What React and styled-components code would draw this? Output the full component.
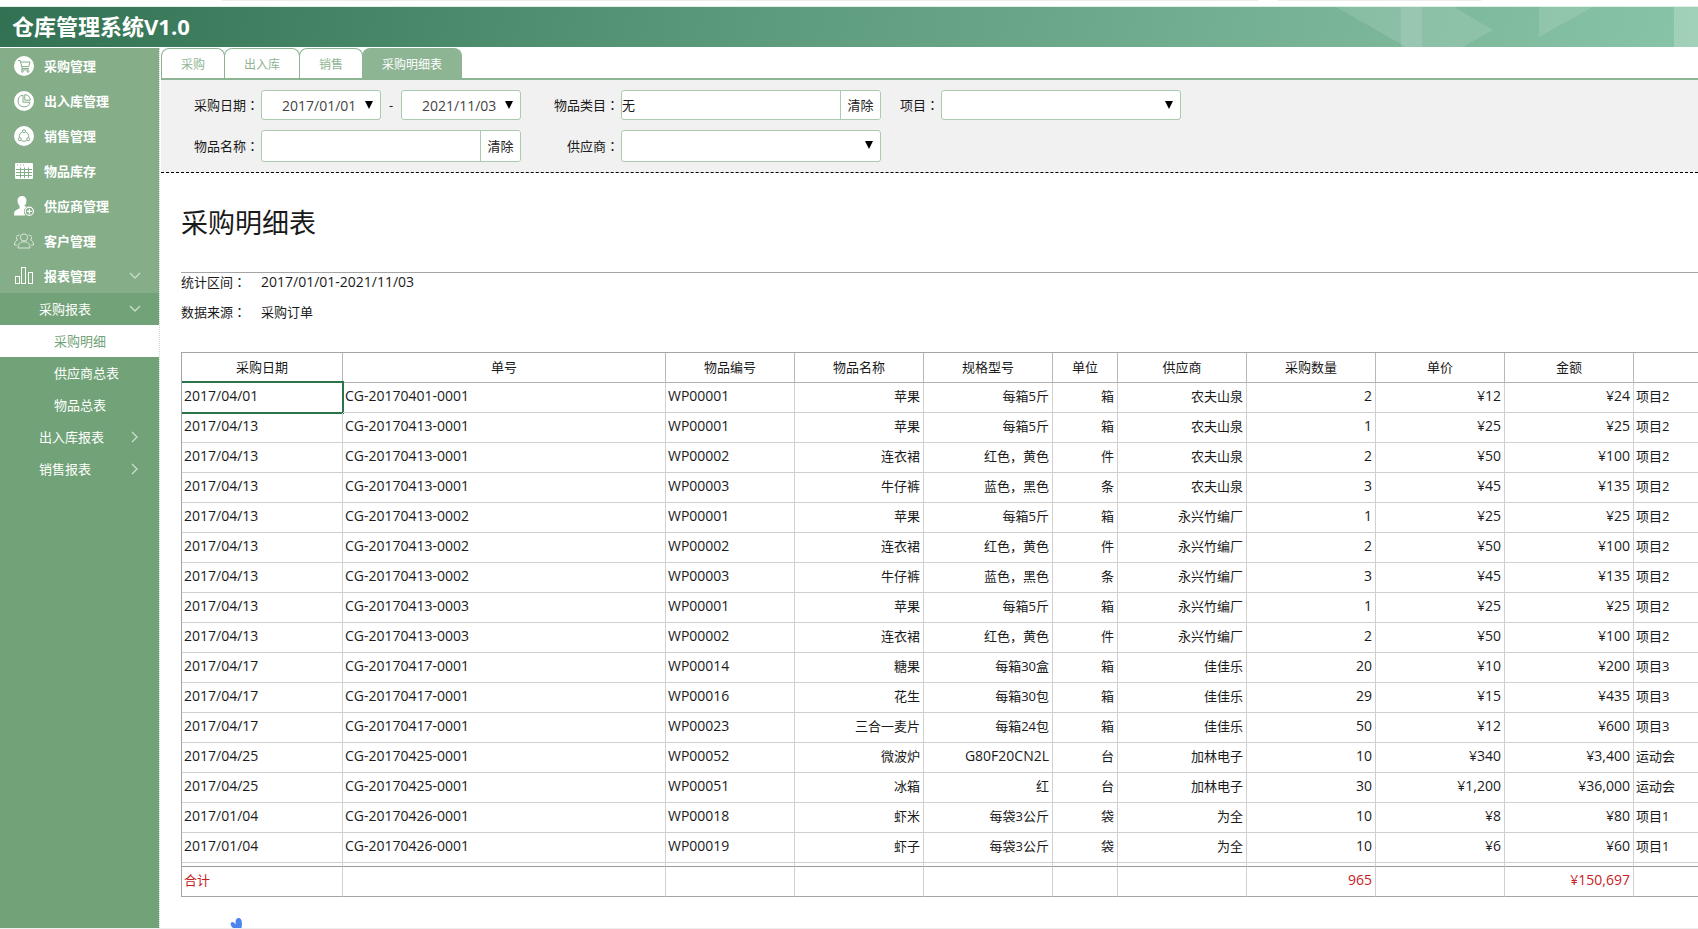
import React from 'react';
import styled, { createGlobalStyle } from 'styled-components';

const menu = [
    { label: '采购管理', icon: 'cart' },
    { label: '出入库管理', icon: 'pie' },
    { label: '销售管理', icon: 'share' },
    { label: '物品库存', icon: 'grid' },
    { label: '供应商管理', icon: 'supplier' },
    { label: '客户管理', icon: 'people' },
    { label: '报表管理', icon: 'bars', open: true },
];

const subMenu = [
    { label: '采购报表', arrow: 'down' },
    { label: '采购明细', leaf: true, active: true },
    { label: '供应商总表', leaf: true },
    { label: '物品总表', leaf: true },
    { label: '出入库报表', arrow: 'right' },
    { label: '销售报表', arrow: 'right' },
];

const tabs = ['采购', '出入库', '销售', '采购明细表'];

const columns = [
    { title: '采购日期', width: 161, latin: true },
    { title: '单号', width: 323, latin: true },
    { title: '物品编号', width: 129, latin: true },
    { title: '物品名称', width: 129, align: 'right' },
    { title: '规格型号', width: 129, align: 'right' },
    { title: '单位', width: 65, align: 'right' },
    { title: '供应商', width: 129, align: 'right' },
    { title: '采购数量', width: 129, align: 'right', latin: true },
    { title: '单价', width: 129, align: 'right', latin: true },
    { title: '金额', width: 129, align: 'right', latin: true },
    { title: '' },
];

const rows = [
    ['2017/04/01', 'CG-20170401-0001', 'WP00001', '苹果', '每箱5斤', '箱', '农夫山泉', '2', '¥12', '¥24', '项目2'],
    ['2017/04/13', 'CG-20170413-0001', 'WP00001', '苹果', '每箱5斤', '箱', '农夫山泉', '1', '¥25', '¥25', '项目2'],
    ['2017/04/13', 'CG-20170413-0001', 'WP00002', '连衣裙', '红色，黄色', '件', '农夫山泉', '2', '¥50', '¥100', '项目2'],
    ['2017/04/13', 'CG-20170413-0001', 'WP00003', '牛仔裤', '蓝色，黑色', '条', '农夫山泉', '3', '¥45', '¥135', '项目2'],
    ['2017/04/13', 'CG-20170413-0002', 'WP00001', '苹果', '每箱5斤', '箱', '永兴竹编厂', '1', '¥25', '¥25', '项目2'],
    ['2017/04/13', 'CG-20170413-0002', 'WP00002', '连衣裙', '红色，黄色', '件', '永兴竹编厂', '2', '¥50', '¥100', '项目2'],
    ['2017/04/13', 'CG-20170413-0002', 'WP00003', '牛仔裤', '蓝色，黑色', '条', '永兴竹编厂', '3', '¥45', '¥135', '项目2'],
    ['2017/04/13', 'CG-20170413-0003', 'WP00001', '苹果', '每箱5斤', '箱', '永兴竹编厂', '1', '¥25', '¥25', '项目2'],
    ['2017/04/13', 'CG-20170413-0003', 'WP00002', '连衣裙', '红色，黄色', '件', '永兴竹编厂', '2', '¥50', '¥100', '项目2'],
    ['2017/04/17', 'CG-20170417-0001', 'WP00014', '糖果', '每箱30盒', '箱', '佳佳乐', '20', '¥10', '¥200', '项目3'],
    ['2017/04/17', 'CG-20170417-0001', 'WP00016', '花生', '每箱30包', '箱', '佳佳乐', '29', '¥15', '¥435', '项目3'],
    ['2017/04/17', 'CG-20170417-0001', 'WP00023', '三合一麦片', '每箱24包', '箱', '佳佳乐', '50', '¥12', '¥600', '项目3'],
    ['2017/04/25', 'CG-20170425-0001', 'WP00052', '微波炉', 'G80F20CN2L', '台', '加林电子', '10', '¥340', '¥3,400', '运动会'],
    ['2017/04/25', 'CG-20170425-0001', 'WP00051', '冰箱', '红', '台', '加林电子', '30', '¥1,200', '¥36,000', '运动会'],
    ['2017/01/04', 'CG-20170426-0001', 'WP00018', '虾米', '每袋3公斤', '袋', '为全', '10', '¥8', '¥80', '项目1'],
    ['2017/01/04', 'CG-20170426-0001', 'WP00019', '虾子', '每袋3公斤', '袋', '为全', '10', '¥6', '¥60', '项目1'],
];

const totals = ['合计', '', '', '', '', '', '', '965', '', '¥150,697', ''];

const icons = {
    cart: (
        <>
            <circle cx="10" cy="10" r="10" fill="#fff" />
            <path d="M4 4.600h2.200l2 7.900h6.600M6.600 6h9.400l-1.300 4.600H7.800M8.200 12.500l-.6 1.400h7.200" stroke="#84ad88" />
            <circle cx="8.400" cy="15.400" r=".9" stroke="#84ad88" />
            <circle cx="14" cy="15.400" r=".9" stroke="#84ad88" />
        </>
    ),
    pie: (
        <>
            <circle cx="10" cy="10" r="10" fill="#fff" />
            <path d="M9 4a6 6 0 1 0 7 7.200H9z" stroke="#84ad88" />
            <path d="M10.800 3.600v5.600h5.500a5.600 5.600 0 0 0-5.500-5.600z" stroke="#84ad88" />
        </>
    ),
    share: (
        <>
            <circle cx="10" cy="10" r="10" fill="#fff" />
            <path d="M8.400 5.800C6.300 6.800 5.100 9 5.300 11.400M11.600 5.800c2.100 1 3.300 3.200 3.100 5.600M7.200 14.500c1.700 1 3.900 1 5.600 0" stroke="#84ad88" />
            <circle cx="10" cy="5.200" r="1.500" stroke="#84ad88" />
            <circle cx="5.800" cy="13.200" r="1.500" stroke="#84ad88" />
            <circle cx="14.200" cy="13.200" r="1.500" stroke="#84ad88" />
        </>
    ),
    grid: (
        <>
            <rect x="1" y="2" width="18" height="16" rx="1" fill="#fff" />
            <path d="M3 4h1M6 4h1M9 4h1" stroke="#84ad88" />
            <path d="M2 8.500h16M2 11.500h16M2 14.500h16M6.500 6.500v10.500M10.500 6.500v10.500M14.500 6.500v10.500" stroke="#84ad88" />
        </>
    ),
    supplier: (
        <>
            <path d="M8 0C5 0 3.400 2.300 3.600 5.200c.2 2 .9 3.600 2 4.600v2.400C4 13.400.6 14 .3 16.400L0 19.400h11.600a5.200 5.200 0 0 1 1.600-8.600l-2.800-.6V9.800c1.200-1 1.900-2.700 2-4.600C12.600 2.200 11 0 8 0z" fill="#fff" />
            <circle cx="15.300" cy="15.300" r="5" fill="#84ad88" />
            <circle cx="15.300" cy="15.300" r="4.100" stroke="#fff" strokeWidth="1.200" />
            <path d="M15.300 12.800v5M12.800 15.300h5" stroke="#fff" strokeWidth="1.200" />
        </>
    ),
    people: (
        <>
            <circle cx="10" cy="6.500" r="3.600" stroke="#dbe9dc" />
            <path d="M4 17c0-4 2.200-6.200 6-6.200s6 2.200 6 6.200zM5.400 4.200C3.400 3.800 2.200 5 2.400 6.800c.1 1 .5 1.700 1.200 2.200C1.600 9.800.5 11.400.5 14h2.300M14.600 4.200c2-.4 3.200.8 3 2.600-.1 1-.5 1.700-1.200 2.200 2 .8 3.100 2.400 3.100 5h-2.300" stroke="#dbe9dc" />
        </>
    ),
    bars: (
        <>
            <rect x="1.500" y="10.500" width="4" height="7" stroke="#fff" />
            <rect x="7.500" y="1.500" width="4" height="16" stroke="#fff" />
            <rect x="14.500" y="6.500" width="4" height="11" stroke="#fff" />
        </>
    ),
};

// The colon sits in the middle of its full-width box
function Text({ children }) {
    return children.split(/(：)/).map((part, i) => (
        part === '：' ? <Colon key={i}>{part}</Colon> : part
    ));
}

function Chevron({ dir }) {
    return (
        <ChevronIcon viewBox="0 0 12 12">
            <path d={dir === 'down' ? 'M1 3l5 5 5-5' : 'M3 1l5 5-5 5'} />
        </ChevronIcon>
    );
}

function DropDown({ id, label, value, date }) {
    return (
        <SelectWrap>
            <Select id={id} aria-label={label} $date={date} defaultValue={value}>
                <option value={value}>{value}</option>
            </Select>
            <Arrow viewBox="0 0 8 8"><path d="M0 0h8L4 8z" /></Arrow>
        </SelectWrap>
    );
}

function Clearable({ id, value }) {
    return (
        <InputGroup>
            <Input id={id} type="text" defaultValue={value} />
            <ClearButton type="button">清除</ClearButton>
        </InputGroup>
    );
}

function App() {
    return (
        <Page>
            <GlobalStyle />
            <TopStrip><TopBar $width="1038px" /><TopBar $width="203px" /></TopStrip>
            <Header>
                <Brand>仓库管理系统V1.0</Brand>
                <HeaderArt viewBox="0 0 368 40">
                    <path d="M6 0h118l39 23-30 17H76z" />
                    <path d="M71 0h21v40H71z" />
                    <path d="M209 0h54l-54 30z" />
                    <path d="M344 0h24v40h-24z" fillOpacity=".22" />
                </HeaderArt>
            </Header>
            <Body>
                <Sidebar>
                    {menu.map((item) => (
                        <MenuItem href="#" key={item.label}>
                            <MenuIcon viewBox="0 0 20 20">{icons[item.icon]}</MenuIcon>
                            <MenuLabel>{item.label}</MenuLabel>
                            {item.open && <Chevron dir="down" />}
                        </MenuItem>
                    ))}
                    <SubMenu>
                        {subMenu.map((item) => (
                            <SubItem href="#" key={item.label} $leaf={item.leaf} $active={item.active}>
                                <MenuLabel>{item.label}</MenuLabel>
                                {item.arrow && <Chevron dir={item.arrow} />}
                            </SubItem>
                        ))}
                    </SubMenu>
                </Sidebar>
                <Main>
                    <Tabs>
                        {tabs.map((tab, i) => (
                            <Tab type="button" key={tab} $active={i === 3}>{tab}</Tab>
                        ))}
                    </Tabs>
                    <Filters>
                        <Label htmlFor="from"><Text>采购日期：</Text></Label>
                        <DateRange>
                            <DropDown id="from" value="2017/01/01" date />
                            <span>-</span>
                            <DropDown id="to" label="结束日期" value="2021/11/03" date />
                        </DateRange>
                        <Label htmlFor="category"><Text>物品类目：</Text></Label>
                        <Clearable id="category" value="无" />
                        <Label htmlFor="project"><Text>项目：</Text></Label>
                        <DropDown id="project" value="" />
                        <Label htmlFor="goods"><Text>物品名称：</Text></Label>
                        <Clearable id="goods" value="" />
                        <Label htmlFor="supplier"><Text>供应商：</Text></Label>
                        <DropDown id="supplier" value="" />
                    </Filters>
                    <Report>
                        <Title>采购明细表</Title>
                        <Info>
                            <dt><Text>统计区间：</Text></dt>
                            <InfoDate>2017/01/01-2021/11/03</InfoDate>
                            <dt><Text>数据来源：</Text></dt>
                            <dd>采购订单</dd>
                        </Info>
                        <Table>
                            <colgroup>
                                {columns.map((col, i) => <Col key={i} $width={col.width} />)}
                            </colgroup>
                            <thead>
                                <tr>
                                    {columns.map((col, i) => <Th key={i} scope="col">{col.title}</Th>)}
                                </tr>
                            </thead>
                            <tbody>
                                {rows.map((row, r) => (
                                    <tr key={r}>
                                        {row.map((cell, c) => (
                                            <Td
                                                key={c}
                                                $align={columns[c].align}
                                                $latin={columns[c].latin || cell === 'G80F20CN2L'}
                                                $selected={r === 0 && c === 0}
                                            >
                                                {cell}
                                            </Td>
                                        ))}
                                    </tr>
                                ))}
                                <tr aria-hidden="true">
                                    {columns.map((col, i) => <CutCell key={i} />)}
                                </tr>
                            </tbody>
                            <tfoot>
                                <tr>
                                    {totals.map((cell, c) => (
                                        <TotalCell key={c} $align={columns[c].align} $latin={columns[c].align}>{cell}</TotalCell>
                                    ))}
                                </tr>
                            </tfoot>
                        </Table>
                    </Report>
                </Main>
            </Body>
            <Heart viewBox="0 0 12 10">
                <path d="M3 10C0 8 0 4 2.500 4 4 4 5 5.500 5.800 6.500 5 3 6 0 8.500 0 12 0 12.500 5 11.500 10z" />
            </Heart>
        </Page>
    );
}

export default App;

const GlobalStyle = createGlobalStyle`
    *{
        box-sizing:border-box;
    }

    body{
        margin:0;
        background:#fff;
        color:#1a1a1a;
        font-family:"Open Sans", "Noto Sans CJK SC", sans-serif;
        font-size:13px;
    }

    button, input, select{
        font-family:inherit;
        font-size:inherit;
        color:inherit;
    }
`

const Page = styled.div`
    position:relative;
    min-height:100vh;
    display:flex;
    flex-direction:column;
    border-bottom:1px solid #eee;
    overflow:hidden;
`

const TopStrip = styled.div`
    height:7px;
    padding-left:221px;
    display:flex;
    gap:19px;
    border-bottom:1px solid #e0f0e7;
`

const TopBar = styled.div`
    width:${(p) => p.$width};
    height:1px;
    background:#ededed;
`

const Header = styled.header`
    height:40px;
    padding-left:12px;
    display:flex;
    justify-content:space-between;
    background:linear-gradient(100deg, #327152 0%, #5c9b7c 45%, #7ab598 80%, #88c4a7 100%);
`

const Brand = styled.h1`
    margin:0;
    color:#fff;
    font-size:22px;
    line-height:38px;
    font-weight:bold;
`

const HeaderArt = styled.svg`
    width:368px;
    height:40px;
    fill:#fff;
    fill-opacity:.12;
`

const Body = styled.div`
    flex:1;
    display:flex;
    margin-top:1px;
`

const Sidebar = styled.nav`
    width:160px;
    flex-shrink:0;
    display:flex;
    flex-direction:column;
    background:#84ad88;
    background-clip:padding-box;
    border-right:1px dotted #c8d8ca;
`

const MenuItem = styled.a`
    height:35px;
    padding:0 18px 0 14px;
    display:flex;
    align-items:center;
    color:#fff;
    font-weight:bold;
    text-decoration:none;
`

const MenuIcon = styled.svg`
    width:20px;
    height:20px;
    margin-right:10px;
    fill:none;
`

const MenuLabel = styled.span`
    flex:1;
    line-height:20px;
`

const ChevronIcon = styled.svg`
    width:12px;
    height:12px;
    fill:none;
    stroke:#c8dcca;
    stroke-width:1.4;
`

const SubMenu = styled.div`
    flex:1;
    background:#72a378;
`

const SubItem = styled.a`
    height:32px;
    padding:0 18px 0 ${(p) => (p.$leaf ? '54px' : '39px')};
    display:flex;
    align-items:center;
    text-decoration:none;
    color:${(p) => (p.$active ? '#72a378' : '#fff')};
    background:${(p) => (p.$active ? '#fff' : 'none')};
`

const Main = styled.main`
    flex:1;
    min-width:0;
    padding-left:1px;
`

const Tabs = styled.div`
    height:32px;
    display:flex;
    border-bottom:2px solid #8eb593;
`

const Tab = styled.button`
    height:30px;
    padding:0 19px;
    border:1px solid #8eb593;
    border-bottom:none;
    border-radius:8px 8px 0 0;
    font-size:12px;
    color:${(p) => (p.$active ? '#fff' : '#8eb593')};
    background:${(p) => (p.$active ? '#8eb593' : '#fff')};

    & + &{
        margin-left:-1px;
    }
`

const Filters = styled.form`
    display:grid;
    grid-template-columns:100px 260px 100px 260px 60px 240px;
    grid-template-rows:30px 32px;
    row-gap:10px;
    padding:10px 0;
    background:#f1f1f1;
    border-bottom:1px dashed #000;
`

const Label = styled.label`
    padding-right:2px;
    align-self:center;
    text-align:right;
    line-height:20px;
`

const Colon = styled.span`
    font-family:"Noto Sans CJK TC", sans-serif;
`

const DateRange = styled.div`
    display:grid;
    grid-template-columns:120px 20px 120px;
    align-items:center;
    text-align:center;
`

const SelectWrap = styled.div`
    position:relative;
    display:flex;
    height:100%;
`

const Select = styled.select`
    width:100%;
    padding:0 20px;
    appearance:none;
    border:1px solid #abcaae;
    border-radius:3px;
    background:#fff;
    color:#444;
    font-size:${(p) => (p.$date ? '14px' : '13px')};
`

const Arrow = styled.svg`
    position:absolute;
    right:8px;
    top:11px;
    width:8px;
    height:8px;
    pointer-events:none;
`

const InputGroup = styled.div`
    display:flex;
    background:#fff;
    border:1px solid #abcaae;
    border-radius:3px;
    overflow:hidden;
`

const Input = styled.input`
    flex:1;
    min-width:0;
    padding:0 0 2px;
    border:none;
    background:none;
`

const ClearButton = styled.button`
    width:40px;
    padding:0 0 2px;
    border:none;
    border-left:1px solid #abcaae;
    background:#fff;
`

const Report = styled.section`
    padding-left:20px;
`

const Title = styled.h2`
    margin:0;
    height:100px;
    border-bottom:1px solid #a5a5a5;
    font-size:27px;
    line-height:100px;
    font-weight:normal;
`

const Info = styled.dl`
    margin:0 0 31px;
    display:grid;
    grid-template-columns:80px 1fr;
    row-gap:12px;
    line-height:18px;

    dd{
        margin:0;
    }
`

const InfoDate = styled.dd`
    font-size:14px;
`

const Table = styled.table`
    width:100%;
    table-layout:fixed;
    border-collapse:separate;
    border-spacing:0;
    border-top:1px solid #a5a5a5;
    border-left:1px solid #a5a5a5;
`

const Col = styled.col`
    width:${(p) => (p.$width ? `${p.$width}px` : 'auto')};
`

const Th = styled.th`
    height:30px;
    padding:0 0 2px;
    border-right:1px solid #b8b8b8;
    border-bottom:1px solid #b0b0b0;
    font-weight:normal;
    line-height:20px;

    &:last-child{
        border-right:none;
    }
`

const Td = styled.td`
    position:relative;
    height:30px;
    padding:0 3px 3px 2px;
    border-right:1px solid #d0d0d0;
    border-bottom:1px solid #d0d0d0;
    text-align:${(p) => p.$align || 'left'};
    font-size:${(p) => (p.$latin ? '14px' : '13px')};
    line-height:20px;
    white-space:nowrap;

    &:last-child{
        border-right:none;
    }

    &:after{
        content:"";
        display:${(p) => (p.$selected ? 'block' : 'none')};
        position:absolute;
        top:-2px;
        right:-2px;
        bottom:-2px;
        left:0;
        border:2px solid #2b7349;
        border-left:none;
    }
`

const CutCell = styled(Td)`
    height:4px;
    padding:0;
    line-height:0;
    border-bottom-color:#999;
`

const TotalCell = styled(Td)`
    color:#c9211e;
    border-bottom-color:#a5a5a5;
`

const Heart = styled.svg`
    position:absolute;
    left:230px;
    bottom:0;
    width:12px;
    height:10px;
    fill:#4c86ec;
`
